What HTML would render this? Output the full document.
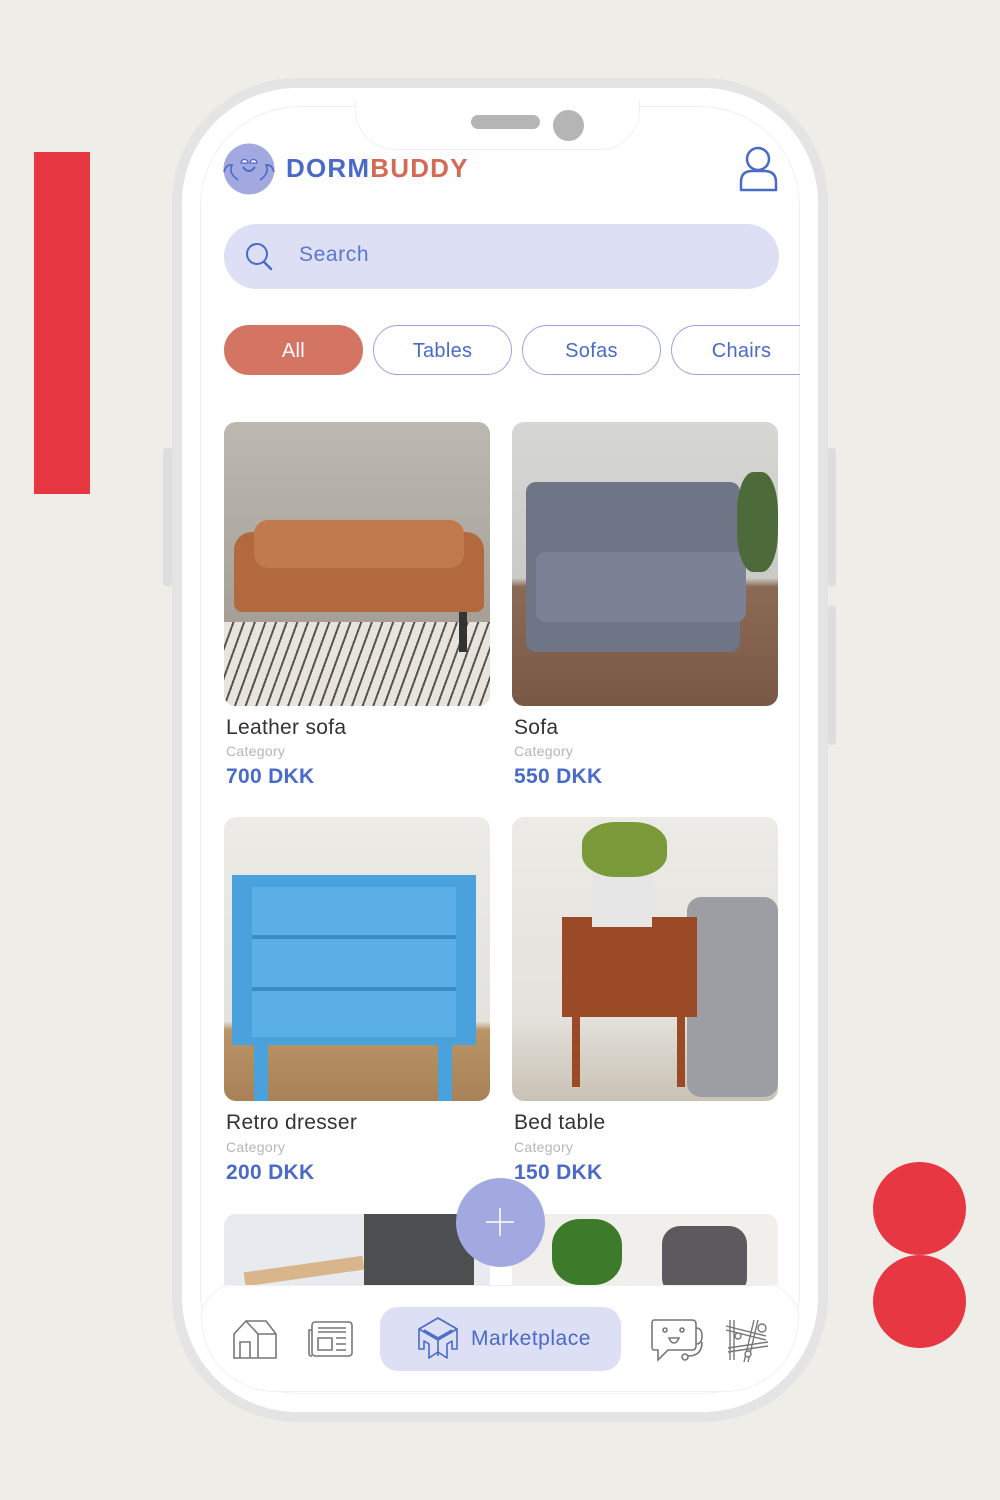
<!DOCTYPE html>
<html><head><meta charset="utf-8"><style>
*{margin:0;padding:0;box-sizing:border-box}
body{width:1000px;height:1500px;background:#efede8;position:relative;overflow:hidden;font-family:"Liberation Sans",sans-serif}
.abs{position:absolute}
.phone{left:172px;top:78px;width:656px;height:1344px;border-radius:125px;background:#e4e4e4}
.body{left:182px;top:88px;width:636px;height:1324px;border-radius:115px;background:#fff}
.screen{left:200px;top:106px;width:600px;height:1288px;border-radius:100px;background:#fff;border:1px solid #f0f0f0;overflow:hidden}
.chip{position:absolute;top:325px;height:50px;width:139px;border-radius:25px;border:1.5px solid #9aa6e0;color:#4a6ac8;font-size:20px;text-align:center;line-height:51px;letter-spacing:0.3px}
.img{position:absolute;width:266px;height:284px;border-radius:12px;overflow:hidden}
.t{position:absolute;font-size:21px;color:#333;letter-spacing:0.3px}
.c{position:absolute;font-size:14px;color:#b5b5b5;letter-spacing:0.3px}
.p{position:absolute;font-size:21px;font-weight:bold;color:#4a6ac8;letter-spacing:0.3px}
</style></head><body>
<div class="abs" style="left:34px;top:152px;width:56px;height:342px;background:#e63743"></div>
<div class="abs" style="left:873px;top:1162px;width:93px;height:93px;border-radius:50%;background:#e63743"></div>
<div class="abs" style="left:873px;top:1255px;width:93px;height:93px;border-radius:50%;background:#e63743"></div>
<div class="abs" style="left:163px;top:448px;width:9px;height:138px;background:#ddd;border-radius:3px"></div>
<div class="abs" style="left:828px;top:448px;width:8px;height:138px;background:#ddd;border-radius:3px"></div>
<div class="abs" style="left:828px;top:606px;width:8px;height:139px;background:#ddd;border-radius:3px"></div>
<div class="abs phone"></div>
<div class="abs body"></div>
<div class="abs screen"></div>
<div class="abs" style="left:355px;top:100px;width:285px;height:50px;border:1px solid #f0f0f0;border-top:none;border-radius:0 0 40px 40px;background:#fff"></div>
<div class="abs" style="left:471px;top:115px;width:69px;height:14px;border-radius:7px;background:#b5b5b5"></div>
<div class="abs" style="left:553px;top:110px;width:31px;height:31px;border-radius:50%;background:#b5b5b5"></div>
<svg class="abs" style="left:222px;top:142px" width="54" height="54" viewBox="0 0 54 54"><circle cx="27" cy="27" r="25.5" fill="#a2a9e0"/><path d="M19 21a3.5 3.5 0 0 1 7 0ZM28 21a3.5 3.5 0 0 1 7 0Z" fill="#fff" stroke="#4a6ac8" stroke-width="1.3"/><path d="M21 25q6 8 12 0" stroke="#4a6ac8" stroke-width="2" fill="none"/><path d="M2 30q2-8 8-7q-4 8 6 15M52 30q-2-8-8-7q4 8-6 15" stroke="#4a6ac8" stroke-width="1.6" fill="none"/></svg>
<div class="abs" style="left:286px;top:153px;font-size:26px;font-weight:bold;letter-spacing:1.2px"><span style="color:#4a6ac8">DORM</span><span style="color:#d26a55">BUDDY</span></div>
<svg class="abs" style="left:737px;top:144px" width="44" height="50" viewBox="0 0 44 50"><circle cx="21" cy="15" r="11" stroke="#4a6ac8" stroke-width="2.5" fill="none"/><path d="M4 46v-8q0-11 11-11h12q12 0 12 11v8z" stroke="#4a6ac8" stroke-width="2.5" fill="none" stroke-linejoin="round"/></svg>
<div class="abs" style="left:224px;top:224px;width:555px;height:65px;border-radius:33px;background:#dde0f5"></div>
<svg class="abs" style="left:244px;top:241px" width="32" height="32" viewBox="0 0 32 32"><circle cx="13" cy="13" r="10" stroke="#4a6ac8" stroke-width="2" fill="none"/><path d="M20 21l7 7" stroke="#4a6ac8" stroke-width="2.5" stroke-linecap="round"/></svg>
<div class="abs" style="left:299px;top:243px;font-size:21px;color:#5b78cc;letter-spacing:0.6px">Search</div>
<div class="chip" style="left:224px;background:#d37562;border-color:#d37562;color:#fff">All</div>
<div class="chip" style="left:373px">Tables</div>
<div class="chip" style="left:522px">Sofas</div>
<div class="chip" style="left:671px;width:129px;border-right:none;border-radius:25px 0 0 25px;padding-left:11px">Chairs</div>
<div class="img" style="left:224px;top:422px;background:linear-gradient(#bdb8b0,#a9a49b 60%,#9a9288)">
 <div class="abs" style="left:0;top:200px;width:266px;height:84px;background:repeating-linear-gradient(110deg,#e8e4dc 0 8px,#555 8px 10px)"></div>
 <div class="abs" style="left:10px;top:110px;width:250px;height:80px;border-radius:18px 18px 8px 8px;background:#b3693e"></div>
 <div class="abs" style="left:30px;top:98px;width:210px;height:48px;border-radius:14px;background:#c07a4c"></div>
 <div class="abs" style="left:235px;top:190px;width:8px;height:40px;background:#333"></div>
</div>
<div class="img" style="left:512px;top:422px;background:linear-gradient(#d6d6d3,#cacac6 55%,#8b6a55 58%,#7a5846)">
 <div class="abs" style="left:14px;top:60px;width:214px;height:170px;border-radius:10px;background:#6e7586"></div>
 <div class="abs" style="left:24px;top:130px;width:210px;height:70px;border-radius:10px;background:#7b8295"></div>
 <div class="abs" style="left:225px;top:50px;width:41px;height:100px;border-radius:40%;background:#4c6a3a"></div>
</div>
<div class="img" style="left:224px;top:817px;background:linear-gradient(#ecebe6,#e3e2dc 72%,#b99467 75%,#a88256)">
 <div class="abs" style="left:8px;top:58px;width:244px;height:170px;background:#4aa2dc"></div>
 <div class="abs" style="left:28px;top:70px;width:204px;height:150px;background:repeating-linear-gradient(#5ab0e6 0 48px,#3a8cc4 48px 52px)"></div>
 <div class="abs" style="left:30px;top:228px;width:14px;height:56px;background:#4aa2dc"></div>
 <div class="abs" style="left:214px;top:228px;width:14px;height:56px;background:#4aa2dc"></div>
</div>
<div class="img" style="left:512px;top:817px;background:linear-gradient(#ecebe6,#e3e2dc 70%,#c9c1b4)">
 <div class="abs" style="left:175px;top:80px;width:91px;height:200px;border-radius:14px;background:#9d9ea3"></div>
 <div class="abs" style="left:50px;top:100px;width:135px;height:100px;background:#9a4a25"></div>
 <div class="abs" style="left:60px;top:200px;width:8px;height:70px;background:#9a4a25"></div>
 <div class="abs" style="left:165px;top:200px;width:8px;height:70px;background:#9a4a25"></div>
 <div class="abs" style="left:80px;top:55px;width:60px;height:55px;background:#e6e6e6"></div>
 <div class="abs" style="left:70px;top:5px;width:85px;height:55px;border-radius:40%;background:#7a9a3a"></div>
</div>
<div class="img" style="left:224px;top:1214px;height:71px;border-radius:12px 12px 0 0;background:#e7ebef"><div class="abs" style="left:140px;top:0;width:110px;height:71px;background:#4d4e50"></div><div class="abs" style="left:20px;top:50px;width:120px;height:14px;background:#d9b58b;transform:rotate(-8deg)"></div></div>
<div class="img" style="left:512px;top:1214px;height:71px;border-radius:12px 12px 0 0;background:#f0efeb"><div class="abs" style="left:40px;top:5px;width:70px;height:66px;border-radius:40%;background:#3d7a2a"></div><div class="abs" style="left:150px;top:12px;width:85px;height:70px;border-radius:18px;background:#5c5a5e"></div></div>
<div class="t" style="left:226px;top:716px">Leather sofa</div>
<div class="c" style="left:226px;top:743px">Category</div>
<div class="p" style="left:226px;top:765px">700 DKK</div>
<div class="t" style="left:514px;top:716px">Sofa</div>
<div class="c" style="left:514px;top:743px">Category</div>
<div class="p" style="left:514px;top:765px">550 DKK</div>
<div class="t" style="left:226px;top:1111px">Retro dresser</div>
<div class="c" style="left:226px;top:1139px">Category</div>
<div class="p" style="left:226px;top:1161px">200 DKK</div>
<div class="t" style="left:514px;top:1111px">Bed table</div>
<div class="c" style="left:514px;top:1139px">Category</div>
<div class="p" style="left:514px;top:1161px">150 DKK</div>
<div class="abs" style="left:201px;top:1285px;width:598px;height:107px;background:#fff;border-radius:40px 40px 90px 90px;border:1px solid #f0f0f0"></div>
<div class="abs" style="left:380px;top:1307px;width:241px;height:64px;border-radius:18px;background:#dde0f5"></div>
<svg class="abs" style="left:416px;top:1316px" width="44" height="46" viewBox="0 0 44 46" fill="none" stroke="#4a6ac8" stroke-width="1.6" stroke-linejoin="round"><path d="M22 2L41 13L22 24L3 13Z"/><path d="M3 13v20h5v-8l5 3v14l9-6 9 6V28l5-3v8h5V13"/><path d="M22 24v16"/><path d="M8 14l14 8 14-8"/></svg>
<div class="abs" style="left:471px;top:1327px;font-size:21px;color:#4a6ac8;letter-spacing:0.5px">Marketplace</div>
<svg class="abs" style="left:232px;top:1318px" width="46" height="42" viewBox="0 0 46 42" fill="none" stroke="#777" stroke-width="1.6"><path d="M2 40V16L14 3L26 16V40ZM14 3h20l10 13v24H26M26 16h18M8 40V24h10v16"/></svg>
<svg class="abs" style="left:308px;top:1320px" width="46" height="38" viewBox="0 0 46 38" fill="none" stroke="#777" stroke-width="1.6"><rect x="4" y="2" width="40" height="34" rx="3"/><path d="M4 10H1v24q0 2 3 2M10 8h28M10 12h28M10 18h14v12H10ZM28 18h10M28 24h10M28 30h10"/></svg>
<svg class="abs" style="left:650px;top:1318px" width="56" height="46" viewBox="0 0 56 46" fill="none" stroke="#777" stroke-width="1.6"><path d="M4 2h38q4 0 4 4v22q0 4-4 4H18l-10 10v-10H4q-2 0-2-4V6q0-4 2-4Z"/><circle cx="15" cy="12" r="2"/><circle cx="32" cy="12" r="2"/><path d="M19 20h10q-2 5-5 5t-5-5z"/><path d="M46 10q6 0 6 8t-6 8M52 24q0 14-14 14"/><circle cx="35" cy="39" r="3"/></svg>
<svg class="abs" style="left:724px;top:1318px" width="46" height="46" viewBox="0 0 46 46" fill="none" stroke="#777" stroke-width="1.4"><path d="M2 8l40 10M2 12l40 10M6 2v40M10 2v40M4 30l40-6M4 34l40-6M30 2l-10 42M34 2l-10 42"/><circle cx="38" cy="10" r="4" fill="#fff"/><circle cx="14" cy="18" r="3" fill="#fff"/><circle cx="24" cy="36" r="3" fill="#fff"/></svg>
<div class="abs" style="left:456px;top:1178px;width:89px;height:89px;border-radius:50%;background:#a2a9e0"></div>
<svg class="abs" style="left:484px;top:1206px" width="32" height="32" viewBox="0 0 32 32"><path d="M16 2v28M2 16h28" stroke="#fff" stroke-width="1.5"/></svg>
</body></html>
